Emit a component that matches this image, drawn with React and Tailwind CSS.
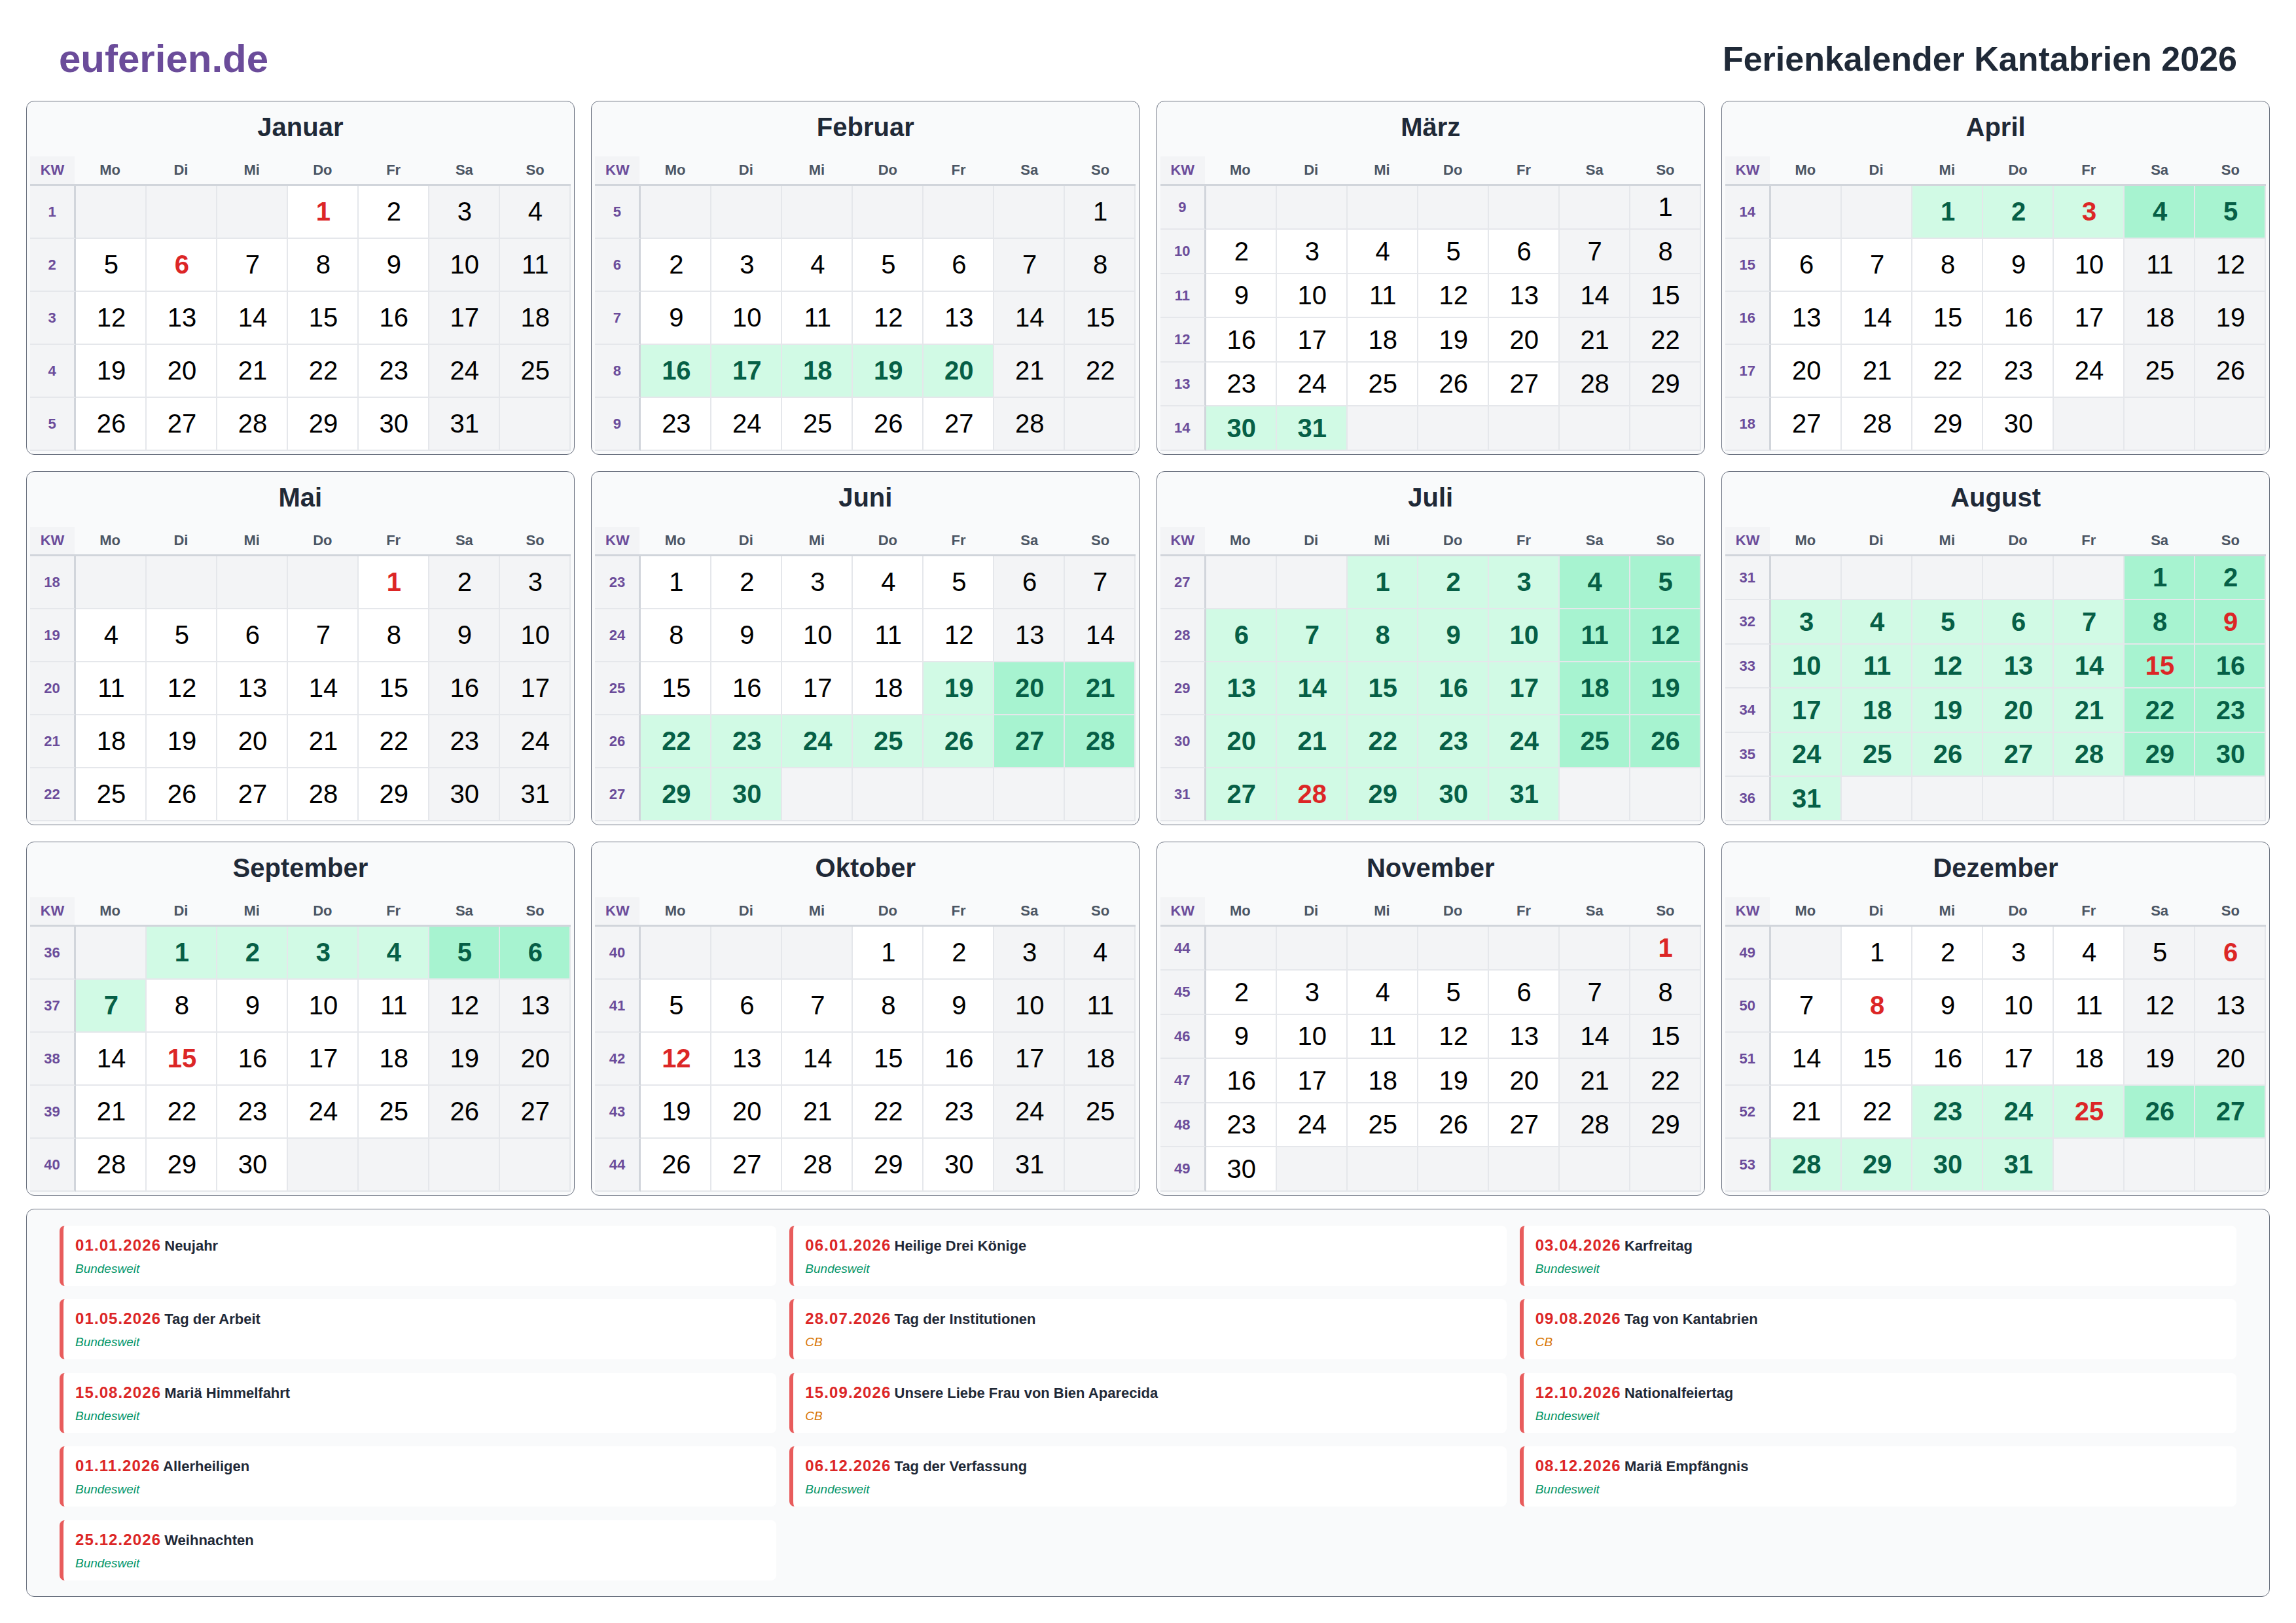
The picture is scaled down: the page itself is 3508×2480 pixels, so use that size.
import React from 'react';

const MONTHS = [
  { name: 'Januar', offset: 3, days: 31, kw: 1 },
  { name: 'Februar', offset: 6, days: 28, kw: 5 },
  { name: 'März', offset: 6, days: 31, kw: 9 },
  { name: 'April', offset: 2, days: 30, kw: 14 },
  { name: 'Mai', offset: 4, days: 31, kw: 18 },
  { name: 'Juni', offset: 0, days: 30, kw: 23 },
  { name: 'Juli', offset: 2, days: 31, kw: 27 },
  { name: 'August', offset: 5, days: 31, kw: 31 },
  { name: 'September', offset: 1, days: 30, kw: 36 },
  { name: 'Oktober', offset: 3, days: 31, kw: 40 },
  { name: 'November', offset: 6, days: 30, kw: 44 },
  { name: 'Dezember', offset: 1, days: 31, kw: 49 },
];

const WEEKDAYS = ['Mo', 'Di', 'Mi', 'Do', 'Fr', 'Sa', 'So'];

// month index -> days
const HOLIDAYS = {
  0: [1, 6],
  3: [3],
  4: [1],
  6: [28],
  7: [9, 15],
  8: [15],
  9: [12],
  10: [1],
  11: [6, 8, 25],
};

const isVacation = (m, d, weekend) => {
  if (m === 1) return d >= 16 && d <= 20 && !weekend;
  if (m === 2) return d >= 30;
  if (m === 3) return d <= 5;
  if (m === 5) return d >= 19;
  if (m === 6 || m === 7) return true;
  if (m === 8) return d <= 7;
  if (m === 11) return d >= 23;
  return false;
};

const LEGEND = [
  ['01.01.2026', 'Neujahr', 'Bundesweit'],
  ['06.01.2026', 'Heilige Drei Könige', 'Bundesweit'],
  ['03.04.2026', 'Karfreitag', 'Bundesweit'],
  ['01.05.2026', 'Tag der Arbeit', 'Bundesweit'],
  ['28.07.2026', 'Tag der Institutionen', 'CB'],
  ['09.08.2026', 'Tag von Kantabrien', 'CB'],
  ['15.08.2026', 'Mariä Himmelfahrt', 'Bundesweit'],
  ['15.09.2026', 'Unsere Liebe Frau von Bien Aparecida', 'CB'],
  ['12.10.2026', 'Nationalfeiertag', 'Bundesweit'],
  ['01.11.2026', 'Allerheiligen', 'Bundesweit'],
  ['06.12.2026', 'Tag der Verfassung', 'Bundesweit'],
  ['08.12.2026', 'Mariä Empfängnis', 'Bundesweit'],
  ['25.12.2026', 'Weihnachten', 'Bundesweit'],
];

const DayCell = ({ month, day, column }) => {
  const base = 'flex items-center justify-center border-r-2 border-b-2 border-[#e5e7eb] pl-[2px] text-[40px] leading-none';
  const weekend = column >= 5;
  if (!day) return <div className={`${base} bg-[#f3f4f6]`} />;

  const holiday = (HOLIDAYS[month] || []).includes(day);
  const vacation = isVacation(month, day, weekend);

  let bg = weekend ? 'bg-[#f3f4f6]' : 'bg-white';
  if (vacation) bg = weekend ? 'bg-[#a7f3d0]' : 'bg-[#d1fae5]';

  let text = 'text-black';
  if (vacation) text = 'font-bold text-[#065f46]';
  if (holiday) text = 'font-bold text-[#dc2626]';

  return <div className={`${base} ${bg} ${text}`}>{day}</div>;
};

const MonthCard = ({ month, index }) => {
  const cells = [];
  for (let i = 0; i < month.offset; i++) cells.push(null);
  for (let d = 1; d <= month.days; d++) cells.push(d);
  while (cells.length % 7) cells.push(null);

  const weeks = [];
  for (let i = 0; i < cells.length; i += 7) weeks.push(cells.slice(i, i + 7));

  return (
    <div className="flex h-[540.5px] flex-col rounded-xl border border-[#6b7280] bg-[#f9fafb] px-[5px] pb-[5px]">
      <h2 className="pt-[19px] pb-[25px] text-center text-[40px] leading-[40px] font-bold text-[#1f2937]">
        {month.name}
      </h2>
      <div className="grid h-[44.5px] grid-cols-[68px_repeat(7,1fr)] border-b-[3px] border-[#d1d5db] text-[22px] font-bold">
        <div className="flex items-center justify-center bg-[#f3f4f6] text-[#6b4c9a]">KW</div>
        {WEEKDAYS.map((w) => (
          <div key={w} className="flex items-center justify-center text-[#4b5563]">
            {w}
          </div>
        ))}
      </div>
      <div className="grid flex-1 auto-rows-fr grid-cols-[70px_repeat(7,1fr)]">
        {weeks.map((week, w) => (
          <React.Fragment key={w}>
            <div className="flex items-center justify-center border-r-[3px] border-b-2 border-r-[#d1d5db] border-b-[#e5e7eb] bg-[#f3f4f6] text-[22px] font-bold text-[#6b4c9a]">
              {month.kw + w}
            </div>
            {week.map((day, c) => (
              <DayCell key={c} month={index} day={day} column={c} />
            ))}
          </React.Fragment>
        ))}
      </div>
    </div>
  );
};

const App = () => {
  return (
    <div className="h-[2480px] w-[3508px] bg-white px-[40px] font-['Liberation_Sans',Arial,sans-serif]">
      {/* Kopfzeile */}
      <header className="flex h-[154px] items-center justify-between pt-[26px] px-[50px]">
        <div className="text-[60px] leading-none font-bold text-[#6b4c9a]">euferien.de</div>
        <h1 className="text-[52px] leading-none font-bold text-[#1f2937]">Ferienkalender Kantabrien 2026</h1>
      </header>

      <div className="grid grid-cols-4 gap-[25.6px]">
        {MONTHS.map((m, i) => (
          <MonthCard key={m.name} month={m} index={i} />
        ))}
      </div>

      {/* Feiertage */}
      <div className="mt-[20px] grid h-[593px] grid-cols-3 content-start gap-x-[20px] gap-y-[20.5px] rounded-xl border border-[#6b7280] bg-[#f9fafb] px-[50px] pt-[25px]">
        {LEGEND.map(([date, name, region]) => (
          <div key={date} className="h-[92px] rounded-lg border-l-[6px] border-[#e85c5c] bg-white pt-[16px] pl-[18px]">
            <div className="text-[22px] leading-[28px] font-bold">
              <span className="mr-[-1px] text-[24px] tracking-[1.1px] text-[#dc2626]">{date}</span>{' '}
              <span className="text-[#1f2937]">{name}</span>
            </div>
            <div
              className={`mt-[9px] text-[19px] leading-[24px] italic ${
                region === 'CB' ? 'text-[#d97706]' : 'text-[#059669]'
              }`}
            >
              {region}
            </div>
          </div>
        ))}
      </div>
    </div>
  );
};

export default App;
